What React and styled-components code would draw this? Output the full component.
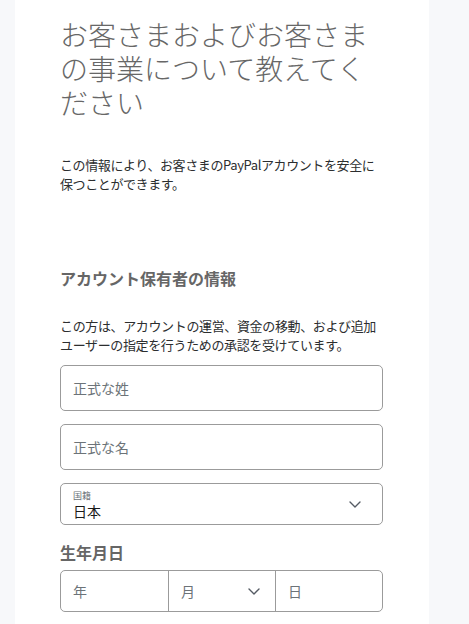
import { createGlobalStyle, styled } from "styled-components";

const GlobalStyle = createGlobalStyle`
  html, body {
    margin: 0;
    padding: 0;
    background: #f7f8fa;
  }
  body {
    font-family: "Noto Sans CJK JP", "Noto Sans", sans-serif;
    color: #2c2e2f;
  }
`;

const Chevron = () => (
  <svg width="12" height="7" viewBox="0 0 12 7" fill="none">
    <path d="M1 1l5 5 5-5" stroke="#555b64" strokeWidth="1.4" strokeLinecap="round" strokeLinejoin="round" />
  </svg>
);

const TextField = ({ placeholder }) => (
  <Field>
    <Placeholder>{placeholder}</Placeholder>
  </Field>
);

const App = () => {
  return (
    <>
      <GlobalStyle />
      <Panel>
        <Title>お客さまおよびお客さまの事業について教えてください</Title>
        <Lead>この情報により、お客さまのPayPalアカウントを安全に保つことができます。</Lead>

        <SectionTitle>アカウント保有者の情報</SectionTitle>
        <Note>この方は、アカウントの運営、資金の移動、および追加ユーザーの指定を行うための承認を受けています。</Note>

        <Fields>
          <TextField placeholder="正式な姓" />
          <TextField placeholder="正式な名" />
        </Fields>

        <Select>
          <SelectText>
            <SmallLabel>国籍</SmallLabel>
            <Value>日本</Value>
          </SelectText>
          <Chevron />
        </Select>

        <SubTitle>生年月日</SubTitle>
        <DateRow>
          <DateCell>
            <Placeholder>年</Placeholder>
          </DateCell>
          <DateCell $select>
            <Placeholder>月</Placeholder>
            <Chevron />
          </DateCell>
          <DateCell>
            <Placeholder>日</Placeholder>
          </DateCell>
        </DateRow>
      </Panel>
    </>
  );
};

export default App;

const Panel = styled.main`
  box-sizing: border-box;
  width: 414px;
  min-height: 100vh;
  margin-left: 15px;
  padding: 17px 46px 20px 45px;
  background: #ffffff;
  display: flex;
  flex-direction: column;
`;

const Title = styled.h1`
  margin: 0;
  font-size: 28px;
  line-height: 34px;
  font-weight: 300;
  color: #676767;
  width: 323px;
`;

const Lead = styled.p`
  margin: 36px 0 0;
  font-size: 13px;
  line-height: 19px;
  letter-spacing: -0.4px;
  color: #2c2e2f;
`;

const SectionTitle = styled.h2`
  margin: 73px 0 0;
  font-size: 16px;
  line-height: 24px;
  font-weight: 700;
  color: #666666;
`;

const Note = styled.p`
  margin: 26px 0 0;
  font-size: 13px;
  line-height: 19px;
  letter-spacing: -0.36px;
  color: #2c2e2f;
`;

const Fields = styled.div`
  display: flex;
  flex-direction: column;
  gap: 13px;
  margin-top: 11px;
`;

const Field = styled.div`
  box-sizing: border-box;
  height: 46px;
  border: 1px solid #9b9b9b;
  border-radius: 5px;
  padding: 0 12px;
  display: flex;
  align-items: center;
`;

const Placeholder = styled.span`
  font-size: 14px;
  color: #6c7378;
`;

const Select = styled.div`
  box-sizing: border-box;
  height: 42px;
  margin-top: 13px;
  border: 1px solid #9b9b9b;
  border-radius: 5px;
  padding: 0 21px 0 12px;
  display: flex;
  align-items: center;
  justify-content: space-between;
`;

const SelectText = styled.div`
  display: flex;
  flex-direction: column;
  padding-top: 1px;
`;

const SmallLabel = styled.span`
  font-size: 9px;
  line-height: 12px;
  color: #6c7378;
`;

const Value = styled.span`
  font-size: 14px;
  line-height: 18px;
  color: #1a1a1a;
`;

const SubTitle = styled.h3`
  margin: 15px 0 0;
  font-size: 16px;
  line-height: 24px;
  font-weight: 700;
  color: #666666;
`;

const DateRow = styled.div`
  box-sizing: border-box;
  margin-top: 6px;
  height: 42px;
  border: 1px solid #9b9b9b;
  border-radius: 5px;
  display: grid;
  grid-template-columns: 1fr 1fr 1fr;
`;

const DateCell = styled.div`
  display: flex;
  align-items: center;
  justify-content: ${(p) => (p.$select ? "space-between" : "flex-start")};
  padding: 0 ${(p) => (p.$select ? "15px" : "12px")} 0 12px;
  & + & {
    border-left: 1px solid #9b9b9b;
  }
`;
